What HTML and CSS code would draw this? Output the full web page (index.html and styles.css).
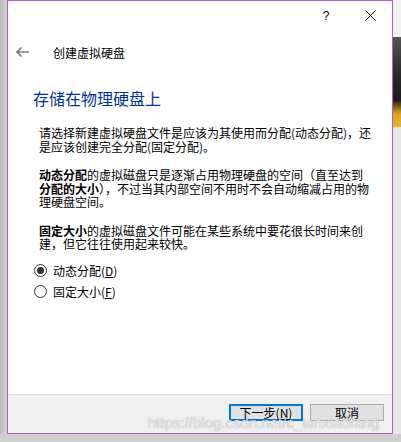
FILE: index.html
```html
<!DOCTYPE html>
<html lang="zh-CN">
<head>
    <meta charset="UTF-8">
    <title>创建虚拟硬盘</title>
    <link rel="stylesheet" href="styles.css">
</head>
<body>
    <div class="desk">
        <div class="edge-left"></div>

        <!-- Dialog window -->
        <div class="dialog">
            <div class="titlebar">
                <span class="cap-btn help">?</span>
                <span class="cap-btn close">
                    <svg width="11" height="11" viewBox="0 0 11 11">
                        <path d="M0.5 0.5 L10.5 10.5 M10.5 0.5 L0.5 10.5" stroke="#000" stroke-width="1" fill="none"/>
                    </svg>
                </span>
            </div>

            <div class="nav">
                <svg class="back" width="13" height="10" viewBox="0 0 13 10">
                    <path d="M1 5 H13 M5.5 0.5 L1 5 L5.5 9.5" stroke="#7a7a7a" stroke-width="1.6" fill="none"/>
                </svg>
                <span class="nav-title">创建虚拟硬盘</span>
            </div>

            <div class="content">
                <h1>存储在物理硬盘上</h1>
                <p>请选择新建虚拟硬盘文件是应该为其使用而分配(动态分配)，还是应该创建完全分配(固定分配)。</p>
                <p><b>动态分配</b>的虚拟磁盘只是逐渐占用物理硬盘的空间（直至达到<b>分配的大小</b>），不过当其内部空间不用时不会自动缩减占用的物理硬盘空间。</p>
                <p><b>固定大小</b>的虚拟磁盘文件可能在某些系统中要花很长时间来创建，但它往往使用起来较快。</p>

                <div class="options">
                    <label class="radio checked"><span class="dot"></span>动态分配(<u>D</u>)</label>
                    <label class="radio"><span class="dot"></span>固定大小(<u>F</u>)</label>
                </div>
            </div>

            <div class="footer">
                <button class="btn primary">下一步(<u>N</u>)</button>
                <button class="btn">取消</button>
            </div>
        </div>

        <div class="edge-right">
            <div class="penguin"></div>
        </div>
    </div>

    <div class="watermark">https://blog.csdn.net/c_lanxiaofang</div>
</body>
</html>
```

FILE: styles.css
```css
body {
    margin: 0;
    padding: 0;
    height: 442px;
    overflow: hidden;
    background: #cfcfcf;
    font-family: "Noto Sans CJK SC", "Liberation Sans", sans-serif;
    font-size: 12px;
    color: #000;
    position: relative;
}

.desk {
    display: flex;
    align-items: flex-start;
}

.edge-left {
    width: 7px;
    height: 434px;
    background: linear-gradient(to right, #bcbcbc, #d2d2d2);
}

.dialog {
    width: 384px;
    height: 432px;
    border: 1px solid #b65dcb;
    background: #fff;
    display: flex;
    flex-direction: column;
}

.titlebar {
    height: 29px;
    display: flex;
    justify-content: flex-end;
    align-items: center;
}

.cap-btn {
    width: 44px;
    display: flex;
    justify-content: center;
    align-items: center;
}

.help {
    font-family: "Liberation Sans", sans-serif;
    font-size: 12px;
}

.nav {
    height: 44px;
    display: flex;
    align-items: center;
    padding-left: 8px;
}

.back {
    margin-right: 24px;
}

.nav-title {
    font-size: 12px;
}

.content {
    padding-left: 25px;
}

h1 {
    margin: 14px 0 0;
    font-size: 16px;
    line-height: 20px;
    font-weight: normal;
    color: #003399;
}

p {
    width: 334px;
    margin: 15px 0 0 6px;
    line-height: 13.5px;
}

p:first-of-type {
    margin-top: 18px;
}

.options {
    margin-top: 9px;
    margin-left: 1px;
}

.radio {
    height: 21px;
    display: flex;
    align-items: center;
}

.dot {
    width: 11px;
    height: 11px;
    border: 1px solid #333;
    border-radius: 50%;
    margin-right: 6px;
    display: flex;
    justify-content: center;
    align-items: center;
}

.radio.checked .dot::after {
    content: "";
    width: 7px;
    height: 7px;
    border-radius: 50%;
    background: #333;
}

.footer {
    margin-top: auto;
    height: 39px;
    border-top: 1px solid #dfdfdf;
    background: #f0f0f0;
    display: flex;
    justify-content: flex-end;
    align-items: flex-start;
    gap: 7px;
    padding: 9px 8px 0 0;
    box-sizing: border-box;
}

.btn {
    width: 74px;
    height: 17px;
    padding: 0;
    font-family: "Noto Sans CJK SC", sans-serif;
    font-size: 12px;
    line-height: 13px;
    color: #000;
    background: #e1e1e1;
    border: 1px solid #adadad;
}

.btn.primary {
    border: 2px solid #0078d7;
}

.edge-right {
    width: 8px;
    height: 434px;
    background: #e6e6e6;
    display: flex;
    flex-direction: column;
}

.edge-right::before {
    content: "";
    height: 37px;
    background: #f2f2f2;
}

.penguin {
    height: 90px;
    background: linear-gradient(to bottom, #555 0%, #2a2a2a 40%, #1c1c1c 70%, #d9a21c 85%, #e8b530 100%);
}

.watermark {
    position: absolute;
    left: 148px;
    top: 414px;
    font-family: "Liberation Sans", sans-serif;
    font-size: 15px;
    color: rgba(255, 255, 255, 0.8);
    text-shadow: 0 0 1px rgba(0, 0, 0, 0.45);
    white-space: nowrap;
}
```
